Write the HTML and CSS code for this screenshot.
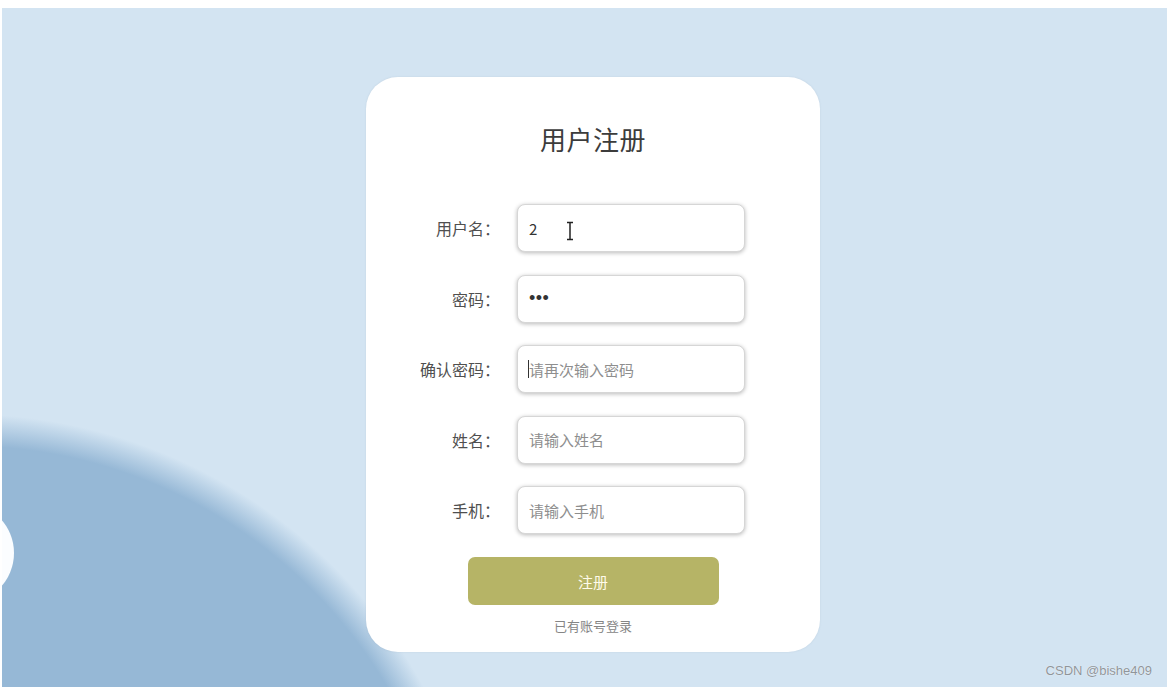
FILE: index.html
```html
<!DOCTYPE html>
<html lang="zh-CN">
<head>
<meta charset="utf-8">
<title>用户注册</title>
<link rel="stylesheet" href="styles.css">
</head>
<body>
<div class="page">
  <div class="blob"></div>
  <div class="card">
    <h1 class="title">用户注册</h1>
    <form class="form">
      <label class="label">用户名：</label>
      <div class="field">
        <input class="input" type="text" value="2">
        <svg class="ibeam" width="8" height="20" viewBox="0 0 8 20"><path d="M1 1.5h6M1 18.5h6M4 1.5v17" stroke="#222" stroke-width="1.5" fill="none"/></svg>
      </div>
      <label class="label">密码：</label>
      <div class="field"><input class="input input-pwd" type="password" value="123"></div>
      <label class="label">确认密码：</label>
      <div class="field"><input class="input" type="password" placeholder="请再次输入密码"><span class="caret"></span></div>
      <label class="label">姓名：</label>
      <div class="field"><input class="input" type="text" placeholder="请输入姓名"></div>
      <label class="label">手机：</label>
      <div class="field"><input class="input" type="text" placeholder="请输入手机"></div>
    </form>
    <button class="btn" type="button">注册</button>
    <a class="link">已有账号登录</a>
  </div>
  <div class="mark">CSDN @bishe409</div>
</div>
</body>
</html>
```

FILE: styles.css
```css
html, body {
  margin: 0;
  padding: 0;
  background: #ffffff;
}
body {
  font-family: "Noto Sans CJK SC", "Noto Sans", sans-serif;
}
.page {
  position: relative;
  margin: 8px 0 0 2px;
  height: 679px;
  overflow: hidden;
  box-sizing: border-box;
  padding: 69px 0 0 17px;
  display: flex;
  justify-content: center;
  align-items: flex-start;
  background:
    radial-gradient(circle at -37px 928px, #96b8d6 0, #96b8d6 490px, #d3e4f2 522px, #d3e4f2 100%);
}
.blob {
  position: absolute;
  left: -88px;
  top: 495px;
  width: 100px;
  height: 100px;
  border-radius: 50%;
  background: #fbfdff;
  filter: blur(0.6px);
}
.card {
  width: 454px;
  height: 575px;
  box-sizing: border-box;
  background: #ffffff;
  border-radius: 32px;
  padding: 44px 0 0 0;
  display: flex;
  flex-direction: column;
  align-items: center;
  box-shadow: 0 0 2px rgba(120, 140, 160, 0.2);
}
.title {
  margin: 0;
  font-size: 26px;
  line-height: 36px;
  font-weight: 400;
  color: #3c3c3c;
  letter-spacing: 0.5px;
}
.form {
  align-self: flex-start;
  margin: 47px 0 0 40px;
  display: grid;
  grid-template-columns: 94px 228px;
  column-gap: 17px;
  row-gap: 22.5px;
  align-items: center;
}
.label {
  text-align: right;
  font-size: 16px;
  line-height: 20px;
  color: #4f4f4f;
  white-space: nowrap;
}
.field {
  position: relative;
  height: 48px;
}
.input {
  display: block;
  width: 100%;
  height: 48px;
  box-sizing: border-box;
  border: 1px solid #d6d6d6;
  border-radius: 8px;
  background: #ffffff;
  box-shadow: 0 1px 4px rgba(0, 0, 0, 0.28);
  padding: 0 11px;
  font-family: "Noto Sans CJK SC", "Noto Sans", sans-serif;
  font-size: 15px;
  color: #333333;
  outline: none;
}
.input-pwd {
  font-family: "Liberation Sans", Arial, sans-serif;
  font-size: 18px;
  letter-spacing: 0.5px;
}
.input::placeholder {
  color: #8e8e8e;
}
.ibeam {
  position: absolute;
  left: 49px;
  top: 17px;
}
.caret {
  position: absolute;
  left: 11px;
  top: 15px;
  width: 1px;
  height: 18px;
  background: #333333;
}
.btn {
  margin-top: 23px;
  width: 251px;
  height: 48px;
  border: none;
  border-radius: 7px;
  background: #b6b466;
  color: #fffbea;
  font-family: "Noto Sans CJK SC", "Noto Sans", sans-serif;
  font-size: 15px;
  cursor: pointer;
}
.link {
  margin-top: 12px;
  font-size: 13px;
  line-height: 18px;
  color: #858585;
}
.mark {
  position: absolute;
  right: 15px;
  bottom: 8px;
  font-family: "Liberation Sans", Arial, sans-serif;
  font-size: 13px;
  line-height: 16px;
  color: #8f959a;
  text-shadow: 0 0 1px #ffffff;
}
```
